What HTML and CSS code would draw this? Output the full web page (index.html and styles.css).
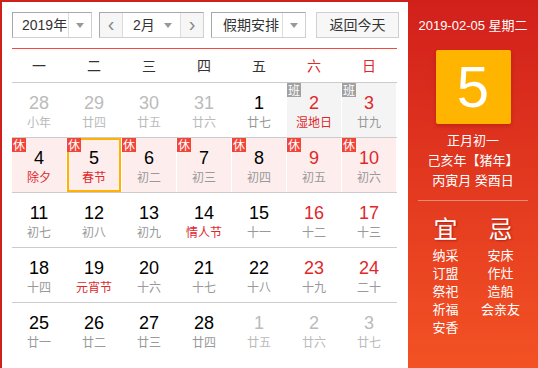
FILE: index.html
```html
<!DOCTYPE html>
<html lang="zh-CN">
<head>
  <meta charset="UTF-8">
  <title>万年历</title>
  <link rel="stylesheet" href="styles.css">
</head>
<body>

  <div class="calendar">
    <div class="main">
      <div class="toolbar">
        <div class="select year">
          <span class="select-text">2019年</span>
          <span class="select-arrow"></span>
        </div>
        <div class="month-group">
          <span class="nav-btn">&lsaquo;</span>
          <div class="month-select">
            <span class="select-text">2月</span>
            <span class="select-arrow"></span>
          </div>
          <span class="nav-btn">&rsaquo;</span>
        </div>
        <div class="select holiday">
          <span class="select-text">假期安排</span>
          <span class="select-arrow"></span>
        </div>
        <div class="today-btn">返回今天</div>
      </div>

      <div class="week-head">
        <span>一</span><span>二</span><span>三</span><span>四</span><span>五</span>
        <span class="red">六</span><span class="red">日</span>
      </div>

      <div class="week">
        <div class="day other"><b>28</b><i>小年</i></div>
        <div class="day other"><b>29</b><i>廿四</i></div>
        <div class="day other"><b>30</b><i>廿五</i></div>
        <div class="day other"><b>31</b><i>廿六</i></div>
        <div class="day"><b>1</b><i>廿七</i></div>
        <div class="day work weekend"><span class="tag">班</span><b>2</b><i class="fest">湿地日</i></div>
        <div class="day work weekend"><span class="tag">班</span><b>3</b><i>廿九</i></div>
      </div>

      <div class="week">
        <div class="day rest"><span class="tag">休</span><b>4</b><i class="fest">除夕</i></div>
        <div class="day rest today"><span class="tag">休</span><b>5</b><i class="fest">春节</i></div>
        <div class="day rest"><span class="tag">休</span><b>6</b><i>初二</i></div>
        <div class="day rest"><span class="tag">休</span><b>7</b><i>初三</i></div>
        <div class="day rest"><span class="tag">休</span><b>8</b><i>初四</i></div>
        <div class="day rest weekend"><span class="tag">休</span><b>9</b><i>初五</i></div>
        <div class="day rest weekend"><span class="tag">休</span><b>10</b><i>初六</i></div>
      </div>

      <div class="week">
        <div class="day"><b>11</b><i>初七</i></div>
        <div class="day"><b>12</b><i>初八</i></div>
        <div class="day"><b>13</b><i>初九</i></div>
        <div class="day"><b>14</b><i class="fest">情人节</i></div>
        <div class="day"><b>15</b><i>十一</i></div>
        <div class="day weekend"><b>16</b><i>十二</i></div>
        <div class="day weekend"><b>17</b><i>十三</i></div>
      </div>

      <div class="week">
        <div class="day"><b>18</b><i>十四</i></div>
        <div class="day"><b>19</b><i class="fest">元宵节</i></div>
        <div class="day"><b>20</b><i>十六</i></div>
        <div class="day"><b>21</b><i>十七</i></div>
        <div class="day"><b>22</b><i>十八</i></div>
        <div class="day weekend"><b>23</b><i>十九</i></div>
        <div class="day weekend"><b>24</b><i>二十</i></div>
      </div>

      <div class="week last">
        <div class="day"><b>25</b><i>廿一</i></div>
        <div class="day"><b>26</b><i>廿二</i></div>
        <div class="day"><b>27</b><i>廿三</i></div>
        <div class="day"><b>28</b><i>廿四</i></div>
        <div class="day other"><b>1</b><i>廿五</i></div>
        <div class="day other"><b>2</b><i>廿六</i></div>
        <div class="day other"><b>3</b><i>廿七</i></div>
      </div>
    </div>

    <div class="side">
      <div class="side-date">2019-02-05 星期二</div>
      <div class="big-day">5</div>
      <div class="lunar-info">
        <p>正月初一</p>
        <p>己亥年【猪年】</p>
        <p>丙寅月 癸酉日</p>
      </div>
      <div class="divider"></div>
      <div class="almanac">
        <div class="col">
          <div class="title">宜</div>
          <p>纳采</p>
          <p>订盟</p>
          <p>祭祀</p>
          <p>祈福</p>
          <p>安香</p>
        </div>
        <div class="col">
          <div class="title">忌</div>
          <p>安床</p>
          <p>作灶</p>
          <p>造船</p>
          <p>会亲友</p>
        </div>
      </div>
    </div>
  </div>

</body>
</html>
```

FILE: styles.css
```css
body {
  margin: 0;
  font-family: Arial, "Liberation Sans", "Noto Sans CJK SC", sans-serif;
  background-color: #fff;
}

.calendar {
  display: flex;
  width: 538px;
  height: 368px;
  box-sizing: border-box;
  border-top: 2px solid #d0201b;
  border-left: 2px solid #d0201b;
  overflow: hidden;
}

/* left part */

.main {
  width: 406px;
  padding: 10px 0 0 10px;
  box-sizing: border-box;
}

.toolbar {
  display: flex;
  height: 26px;
  margin-bottom: 10px;
}

.select, .month-group, .today-btn {
  display: flex;
  box-sizing: border-box;
  height: 26px;
  border: 1px solid #d0d0d0;
  border-top-color: #a8a8a8;
  border-left-color: #a8a8a8;
  font-size: 14px;
  color: #333;
}

.select-text {
  flex: 1;
  line-height: 24px;
  padding-left: 9px;
}

.select-arrow {
  width: 22px;
  border-left: 1px solid #ddd;
  position: relative;
}

.select-arrow::after {
  content: "";
  position: absolute;
  left: 7px;
  top: 10px;
  border: 4px solid transparent;
  border-top: 5px solid #999;
  border-bottom: none;
}

.year {
  width: 80px;
}

.month-group {
  width: 105px;
  margin-left: 7px;
}

.nav-btn {
  width: 22px;
  background-color: #f6f6f6;
  text-align: center;
  line-height: 22px;
  font-size: 20px;
  color: #888;
}

.month-group .nav-btn:first-child {
  border-right: 1px solid #ddd;
}

.month-group .nav-btn:last-child {
  border-left: 1px solid #ddd;
}

.month-select {
  flex: 1;
  display: flex;
}

.month-select .select-text {
  padding-left: 10px;
}

.month-select .select-arrow {
  border-left: none;
  width: 20px;
}

.month-select .select-arrow::after {
  left: 4px;
}

.holiday {
  width: 95px;
  margin-left: 7px;
}

.holiday .select-text {
  padding-left: 11px;
}

.today-btn {
  width: 83px;
  margin-left: 10px;
  justify-content: center;
  line-height: 24px;
  background-color: #f7f7f7;
  border-color: #d0d0d0;
}

.week-head {
  display: grid;
  grid-template-columns: repeat(7, 54px);
  column-gap: 1px;
  width: 385px;
  height: 33px;
  border-top: 1px solid #f04b3e;
  border-bottom: 1px solid #ccc;
  font-size: 14px;
  line-height: 33px;
  text-align: center;
  color: #333;
  font-family: "Noto Sans CJK SC", sans-serif;
}

.red {
  color: #e0282a;
}

.week {
  display: grid;
  grid-template-columns: repeat(7, 54px);
  column-gap: 1px;
  width: 385px;
  border-bottom: 1px solid #ccc;
}

.week.last {
  border-bottom: none;
}

.day {
  position: relative;
  height: 54px;
  box-sizing: border-box;
  padding-top: 10px;
  text-align: center;
}

.day b {
  display: block;
  font-weight: normal;
  font-size: 18px;
  line-height: 20px;
  color: #000;
}

.day i {
  display: block;
  font-style: normal;
  font-size: 12px;
  line-height: 18px;
  color: #999;
  font-family: "Noto Sans CJK SC", sans-serif;
}

.day i.fest {
  color: #e0282a;
}

.day.weekend b {
  color: #e0282a;
}

.day.other b, .day.other i {
  color: #bbb;
}

.day.rest {
  background-color: #fdeeed;
}

.day.work {
  background-color: #f4f4f4;
}

.day.today {
  box-shadow: inset 0 0 0 2px #ffb300;
}

.tag {
  position: absolute;
  left: 0;
  top: 0;
  width: 14px;
  height: 14px;
  font-size: 12px;
  line-height: 14px;
  color: #fff;
  background-color: #f2453a;
  font-family: "Noto Sans CJK SC", sans-serif;
}

.work .tag {
  background-color: #a0a0a0;
}

/* right part */

.side {
  width: 130px;
  margin-left: auto;
  background: linear-gradient(#d2201b, #f35224);
  color: #fff;
  text-align: center;
  font-family: Arial, "Noto Sans CJK SC", sans-serif;
}

.side-date {
  margin-top: 16px;
  font-size: 13px;
  line-height: 16px;
}

.big-day {
  width: 75px;
  height: 74px;
  margin: 16px auto 0;
  background-color: #ffb400;
  border-radius: 2px;
  box-shadow: 0 2px 4px rgba(120, 0, 0, 0.3);
  font-size: 58px;
  line-height: 74px;
}

.lunar-info {
  margin-top: 7px;
  font-size: 13px;
  line-height: 20px;
}

.lunar-info p, .almanac p {
  margin: 0;
}

.divider {
  height: 1px;
  margin: 9px 10px 0;
  background-color: rgba(255, 255, 255, 0.4);
}

.almanac {
  display: flex;
  margin: 14px 10px 0;
  font-size: 13px;
  line-height: 18px;
}

.almanac .col {
  flex: 1;
}

.almanac .title {
  font-size: 24px;
  line-height: 30px;
  margin-bottom: 2px;
  text-shadow: 1px 1px 2px rgba(120, 0, 0, 0.5);
}
```
